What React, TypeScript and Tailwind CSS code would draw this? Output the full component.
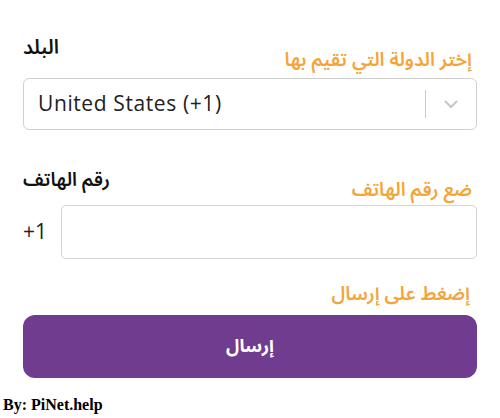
import React from "react";

const arabic = { fontFamily: '"Noto Sans Arabic", "Noto Sans", "DejaVu Sans", sans-serif' };
const latin = { fontFamily: '"Open Sans", Lato, sans-serif' };

export default function App() {
  return (
    <div className="w-[500px] h-[418px] bg-white relative overflow-hidden">
      <div className="px-[23px] pt-[34px]">
        <div className="flex justify-between items-end h-[36px]">
          <span dir="rtl" className="text-[20px] font-semibold text-[#111] leading-none mb-[12px]" style={arabic}>
            البلد
          </span>
          <span dir="rtl" className="text-[19px] font-semibold text-[#f3a53a] leading-none mr-[5px]" style={arabic}>
            إختر الدولة التي تقيم بها
          </span>
        </div>
        <div className="mt-[8px] h-[52px] border border-[#cfcfcf] rounded-[6px] flex items-center">
          <span className="flex-1 pl-[14px] text-[21px] text-[#222] tracking-[0.6px]" style={latin}>
            United States (+1)
          </span>
          <div className="w-px h-[28px] bg-[#cccccc]" />
          <div className="w-[50px] flex justify-center">
            <svg width="18" height="12" viewBox="0 0 18 12">
              <path d="M3 3 L9 9 L15 3" fill="none" stroke="#c8c8c8" strokeWidth="2.2" />
            </svg>
          </div>
        </div>

        <div className="flex justify-between items-end h-[28px] mt-[38px]">
          <span dir="rtl" className="text-[19px] font-semibold text-[#111] leading-none mb-[6px]" style={arabic}>
            رقم الهاتف
          </span>
          <span dir="rtl" className="text-[19px] font-semibold text-[#f3a53a] leading-none mr-[5px] -mb-[4px]" style={arabic}>
            ضع رقم الهاتف
          </span>
        </div>
        <div className="mt-[9px] flex items-center">
          <span className="w-[38px] text-[21px] text-[#222]" style={latin}>
            +1
          </span>
          <div className="flex-1 h-[54px] border border-[#d4d4d4] rounded-[5px]" />
        </div>

        <div className="flex justify-end mt-[26px]">
          <span dir="rtl" className="text-[19px] font-semibold text-[#f3a53a] leading-none mr-[7px]" style={arabic}>
            إضغط على إرسال
          </span>
        </div>
        <div className="mt-[11px] h-[63px] rounded-[12px] bg-[#6f3c90] flex items-center justify-center">
          <span dir="rtl" className="text-[18px] font-bold text-white" style={arabic}>
            إرسال
          </span>
        </div>
      </div>
      <div
        className="absolute left-[3px] top-[393px] text-[16px] font-bold text-black"
        style={{ fontFamily: '"Liberation Serif", serif' }}
      >
        By: PiNet.help
      </div>
    </div>
  );
}
